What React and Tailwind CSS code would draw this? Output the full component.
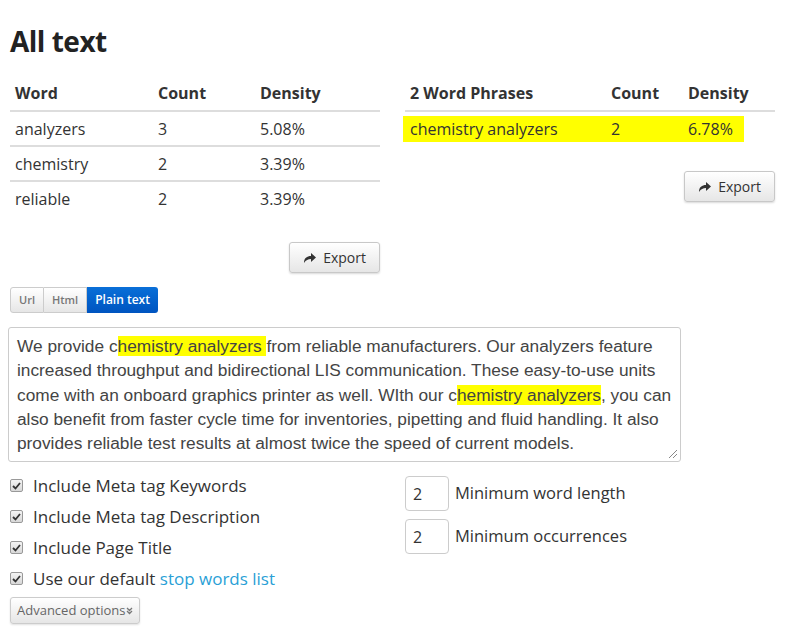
import React from 'react';

const words = [
  { word: 'analyzers', count: 3, density: '5.08%' },
  { word: 'chemistry', count: 2, density: '3.39%' },
  { word: 'reliable', count: 2, density: '3.39%' },
];

const ShareIcon = () => (
  <svg width="14" height="12" viewBox="0 0 14 12" className="mr-[6px]">
    <path d="M1 11 C1 6 4 4 8 4 V1 L13 5.5 L8 10 V7 C5 7 3 8 1 11 Z" fill="#333" />
  </svg>
);

const ExportButton = () => (
  <button className="flex items-center h-[31px] px-[13px] border border-[#c8c8c8] rounded-[3px] bg-gradient-to-b from-white to-[#e6e6e6] shadow-[0_1px_2px_rgba(0,0,0,0.15)] text-[14px] text-[#333]">
    <ShareIcon />
    Export
  </button>
);

const Check = ({ children }) => (
  <label className="flex items-center h-[31px]">
    <span className="w-[13px] h-[13px] rounded-[2px] border border-[#999] bg-gradient-to-b from-[#f4f4f4] to-[#d8d8d8] flex items-center justify-center mr-[10px]">
      <svg width="9" height="8" viewBox="0 0 9 8">
        <path d="M1 4 L3.5 6.5 L8 1" stroke="#333" strokeWidth="1.8" fill="none" />
      </svg>
    </span>
    <span className="text-[17px] text-[#333]">{children}</span>
  </label>
);

const Hl = ({ children }) => <span className="bg-[#ffff00]">{children}</span>;

export default function App() {
  return (
    <div className="w-[800px] h-[627px] bg-white text-[#333] font-['Open_Sans',sans-serif] px-[10px] overflow-hidden">
      <h1 className="text-[28px] font-bold tracking-[-0.5px] pt-[22px] leading-[38px] text-[#222]">All text</h1>

      <div className="flex mt-[18px] gap-[25px]">
        <div className="w-[370px]">
          <table className="w-full text-[16px] border-collapse">
            <thead>
              <tr className="border-b-2 border-[#ddd]">
                <th className="text-left font-bold px-[5px] h-[33px] align-top pt-[3px] w-[148px]">Word</th>
                <th className="text-left font-bold px-0 align-top pt-[3px] w-[102px]">Count</th>
                <th className="text-left font-bold align-top pt-[3px]">Density</th>
              </tr>
            </thead>
            <tbody>
              {words.map((w, i) => (
                <tr key={w.word} className={i < words.length - 1 ? 'border-b-2 border-[#ddd]' : ''}>
                  <td className="px-[5px] h-[35px]">{w.word}</td>
                  <td>{w.count}</td>
                  <td>{w.density}</td>
                </tr>
              ))}
            </tbody>
          </table>
          <div className="flex justify-end mt-[26px]">
            <ExportButton />
          </div>
        </div>

        <div className="w-[370px]">
          <table className="w-full text-[16px] border-collapse">
            <thead>
              <tr className="border-b-2 border-[#ddd]">
                <th className="text-left font-bold px-[5px] h-[33px] align-top pt-[3px] w-[206px]">2 Word Phrases</th>
                <th className="text-left font-bold align-top pt-[3px] w-[77px]">Count</th>
                <th className="text-left font-bold align-top pt-[3px]">Density</th>
              </tr>
            </thead>
            <tbody>
              <tr>
                <td className="h-[35px] py-[4px]" colSpan={3}>
                  <div className="flex items-center bg-[#ffff00] h-[26px] w-[341px] -ml-[2px]">
                    <span className="w-[208px] pl-[7px]">chemistry analyzers</span>
                    <span className="w-[77px]">2</span>
                    <span>6.78%</span>
                  </div>
                </td>
              </tr>
            </tbody>
          </table>
          <div className="flex justify-end mt-[25px]">
            <ExportButton />
          </div>
        </div>
      </div>

      <div className="flex mt-[14px] text-[11px] font-semibold">
        <span className="h-[26px] px-[8px] flex items-center border border-[#ccc] rounded-l-[3px] bg-gradient-to-b from-white to-[#e6e6e6] text-[#777]">Url</span>
        <span className="h-[26px] px-[8px] flex items-center border border-l-0 border-[#ccc] bg-gradient-to-b from-white to-[#e6e6e6] text-[#777]">Html</span>
        <span className="h-[26px] px-[8px] flex items-center rounded-r-[3px] bg-gradient-to-b from-[#0a6fd8] to-[#0054c0] text-white text-[12px]">Plain text</span>
      </div>

      <div className="relative mt-[14px] -ml-[2px] w-[673px] h-[135px] border border-[#ccc] rounded-[3px] px-[8px] py-[6px] font-['Liberation_Sans',Arial,sans-serif] text-[17.3px] leading-[24.3px] text-[#444] whitespace-nowrap">
        We provide c<Hl>hemistry analyzers </Hl>from reliable manufacturers. Our analyzers feature
        <br />
        increased throughput and bidirectional LIS communication. These easy-to-use units
        <br />
        come with an onboard graphics printer as well. WIth our c<Hl>hemistry analyzers</Hl>, you can
        <br />
        also benefit from faster cycle time for inventories, pipetting and fluid handling. It also
        <br />
        provides reliable test results at almost twice the speed of current models.
        <svg width="10" height="10" viewBox="0 0 10 10" className="absolute right-[2px] bottom-[2px]">
          <path d="M9 1 L1 9 M9 5 L5 9" stroke="#888" strokeWidth="1" />
        </svg>
      </div>

      <div className="flex mt-[8px]">
        <div className="w-[395px]">
          <Check>Include Meta tag Keywords</Check>
          <Check>Include Meta tag Description</Check>
          <Check>Include Page Title</Check>
          <Check>
            Use our default <span className="text-[#2a9fd6]">stop words list</span>
          </Check>
          <button className="mt-[3px] h-[27px] px-[6px] border border-[#ccc] rounded-[3px] bg-gradient-to-b from-white to-[#e6e6e6] shadow-[0_1px_2px_rgba(0,0,0,0.12)] text-[13px] text-[#666] flex items-center">
            Advanced options
            <svg width="7" height="8" viewBox="0 0 7 8" className="ml-[1px]">
              <path d="M1 1 L3.5 3.5 L6 1 M1 4 L3.5 6.5 L6 4" stroke="#777" strokeWidth="1.3" fill="none" />
            </svg>
          </button>
        </div>
        <div className="flex flex-col gap-[8px] mt-[6px]">
          <div className="flex items-center">
            <span className="w-[44px] h-[35px] border border-[#ccc] rounded-[4px] flex items-center pl-[7px] text-[16px] mr-[6px]">2</span>
            <span className="text-[16.5px]">Minimum word length</span>
          </div>
          <div className="flex items-center">
            <span className="w-[44px] h-[35px] border border-[#ccc] rounded-[4px] flex items-center pl-[7px] text-[16px] mr-[6px]">2</span>
            <span className="text-[16.5px]">Minimum occurrences</span>
          </div>
        </div>
      </div>
    </div>
  );
}
